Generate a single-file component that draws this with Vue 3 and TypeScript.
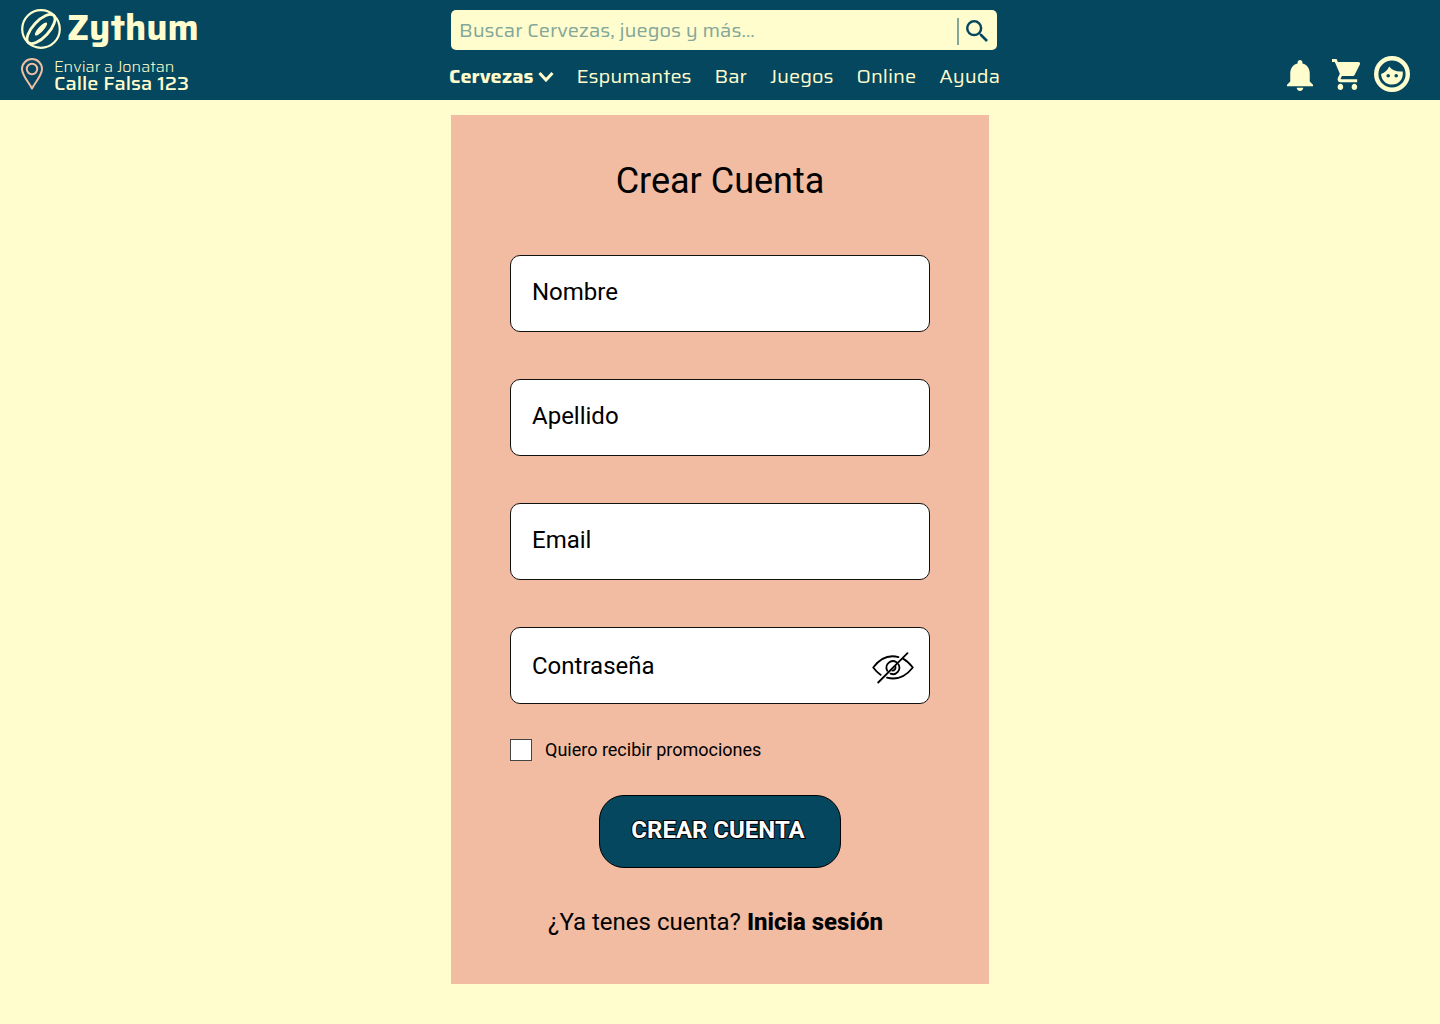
<script setup lang="ts">
import { reactive, ref } from 'vue'

interface Field {
  id: 'nombre' | 'apellido' | 'email'
  label: string
  type: string
}

const sections: string[] = ['Espumantes', 'Bar', 'Juegos', 'Online', 'Ayuda']

const fields: Field[] = [
  { id: 'nombre', label: 'Nombre', type: 'text' },
  { id: 'apellido', label: 'Apellido', type: 'text' },
  { id: 'email', label: 'Email', type: 'email' },
]

const form = reactive({ nombre: '', apellido: '', email: '', password: '', promos: false })
const query = ref('')
const showPassword = ref(false)
</script>

<template>
  <div class="page">
    <header class="header">
      <div class="brand-area">
        <a class="brand" href="#">
          <svg class="brand-mark" viewBox="0 0 40 40" aria-hidden="true">
            <circle cx="20" cy="20" r="18.8" fill="none" stroke="currentColor" stroke-width="2.2" />
            <g transform="rotate(-47 20 20)">
              <ellipse cx="20" cy="20" rx="18.6" ry="8" fill="none" stroke="currentColor" stroke-width="2.8" />
              <ellipse cx="20" cy="20" rx="8.6" ry="2.6" fill="currentColor" />
            </g>
          </svg>
          <span>Zythum</span>
        </a>
        <a class="address" href="#">
          <svg class="pin" viewBox="0 0 22 32" aria-hidden="true">
            <g fill="none" stroke="currentColor" stroke-width="2">
              <path d="M11 30.5C8 24.5 1 17.5 1 11a10 10 0 0 1 20 0c0 6.5-7 13.5-10 19.5z" stroke-linejoin="round" />
              <circle cx="11" cy="11" r="5.2" />
            </g>
          </svg>
          <span class="address-text">
            <span class="address-to">Enviar a Jonatan</span>
            <strong class="address-street">Calle Falsa 123</strong>
          </span>
        </a>
      </div>

      <div class="center">
        <form class="search" role="search" @submit.prevent>
          <input v-model="query" type="search" placeholder="Buscar Cervezas, juegos y más..." aria-label="Buscar" />
          <button type="submit" aria-label="Buscar">
            <svg viewBox="3 3 17.5 17.5" aria-hidden="true">
              <path fill="currentColor" d="M15.5 14h-.79l-.28-.27A6.471 6.471 0 0 0 16 9.5 6.5 6.5 0 1 0 9.5 16c1.61 0 3.09-.59 4.23-1.57l.27.28v.79l5 4.99L20.49 19l-4.99-5zm-6 0C7.01 14 5 11.99 5 9.5S7.01 5 9.5 5 14 7.01 14 9.5 11.99 14 9.5 14z" />
            </svg>
          </button>
        </form>
        <nav class="nav">
          <a class="current" href="#">
            Cervezas
            <svg viewBox="0 0 16 12" aria-hidden="true">
              <path d="M1.5 3 8 10l6.5-7" fill="none" stroke="currentColor" stroke-width="3" />
            </svg>
          </a>
          <a v-for="section in sections" :key="section" href="#">{{ section }}</a>
        </nav>
      </div>

      <div class="actions">
        <button type="button" aria-label="Notificaciones">
          <svg class="bell" viewBox="4 2.5 16 19.5" preserveAspectRatio="none" aria-hidden="true">
            <path fill="currentColor" d="M12 22c1.1 0 2-.9 2-2h-4c0 1.1.89 2 2 2zm6-6v-5c0-3.07-1.64-5.64-4.5-6.32V4c0-.83-.67-1.5-1.5-1.5s-1.5.67-1.5 1.5v.68C7.63 5.36 6 7.92 6 11v5l-2 2v1h16v-1l-2-2z" />
          </svg>
        </button>
        <button type="button" aria-label="Carrito">
          <svg class="cart" viewBox="1 2 20 20" preserveAspectRatio="none" aria-hidden="true">
            <path fill="currentColor" d="M7 18c-1.1 0-1.99.9-1.99 2S5.9 22 7 22s2-.9 2-2-.9-2-2-2zM1 2v2h2l3.6 7.59-1.35 2.45c-.16.28-.25.61-.25.96 0 1.1.9 2 2 2h12v-2H7.42c-.14 0-.25-.11-.25-.25l.03-.12.9-1.63h7.45c.75 0 1.41-.41 1.75-1.03l3.58-6.49A1.003 1.003 0 0 0 20 4H5.21l-.94-2H1zm16 16c-1.1 0-1.99.9-1.99 2s.89 2 1.99 2 2-.9 2-2-.9-2-2-2z" />
          </svg>
        </button>
        <button type="button" aria-label="Mi cuenta">
          <svg class="face" viewBox="0 0 36 36" aria-hidden="true">
            <circle cx="18" cy="18" r="15.8" fill="none" stroke="currentColor" stroke-width="4.4" />
            <path fill="currentColor" fill-rule="evenodd" d="M15.2 10.6c2.8 3.9 7.8 5.5 13.6 4.9.6 8.200-4 13.100-10.800 13.100-6.200 0-10.700-4.400-10.900-10.600 3.800-1.500 6.600-3.700 8.100-7.400zM14.200 18a1.800 1.800 0 1 0 0 3.600 1.800 1.800 0 0 0 0-3.600zm8 0a1.800 1.800 0 1 0 0 3.600 1.800 1.800 0 0 0 0-3.600z" />
          </svg>
        </button>
      </div>
    </header>

    <main class="card">
      <h1>Crear Cuenta</h1>
      <form class="signup" @submit.prevent>
        <div v-for="field in fields" :key="field.id" class="field">
          <input :id="field.id" v-model="form[field.id]" :type="field.type" :placeholder="field.label" :aria-label="field.label" />
        </div>
        <div class="field field-password">
          <input id="password" v-model="form.password" :type="showPassword ? 'text' : 'password'" placeholder="Contraseña" aria-label="Contraseña" />
          <button class="reveal" type="button" aria-label="Mostrar contraseña" @click="showPassword = !showPassword">
            <svg viewBox="0 0 42 32" aria-hidden="true">
              <g fill="none" stroke="currentColor" stroke-width="1.8" stroke-linecap="round" stroke-linejoin="round">
                <path d="M26.5 5.1C15.5 2.2 7.2 7.5 1.2 15.5c2.4 3.2 4.700 5.600 7.600 7.400M31 6.600c3.700 2 6.800 5.100 9.800 8.900-6.800 8.700-15.300 12.900-25.800 10.200" />
                <path d="M24.500 10.200a6.500 6.500 0 0 0-9.200 8.600M26.500 12.400a6.500 6.500 0 0 1-8 9.300" />
                <path d="M23.500 14.800a3.300 3.300 0 0 1-3 3.900" />
                <path d="M35.500 1.200 6.200 30.500" />
              </g>
            </svg>
          </button>
        </div>
        <label class="promos">
          <input v-model="form.promos" type="checkbox" />
          <span>Quiero recibir promociones</span>
        </label>
        <button class="submit" type="submit">CREAR CUENTA</button>
      </form>
      <p class="login">¿Ya tenes cuenta? <a href="#">Inicia sesión</a></p>
    </main>
  </div>
</template>

<style>
body {
  margin: 0;
  background: #fffdcd;
}
</style>

<style scoped>
.page {
  box-sizing: border-box;
  min-height: 100vh;
  padding-bottom: 40px;
  background: #fffdcd;
  color: #000;
  font-family: Roboto, sans-serif;
}

button,
input {
  font: inherit;
}

button {
  padding: 0;
  border: 0;
  background: none;
  color: inherit;
  cursor: pointer;
}

a {
  color: inherit;
  text-decoration: none;
}

svg {
  display: block;
}

.header {
  box-sizing: border-box;
  display: grid;
  grid-template-columns: minmax(190px, 1fr) minmax(0, 546px) minmax(150px, 1fr);
  min-height: 100px;
  padding: 8px 13px 8px 21px;
  background: #04475e;
  color: #fffdcd;
  font-family: Saira, Inter, sans-serif;
}

.brand-area {
  display: flex;
  flex-direction: column;
  gap: 9px;
}

.brand {
  display: flex;
  align-items: flex-end;
  gap: 6px;
  height: 41px;
  font-size: 36px;
  font-weight: 700;
  line-height: 42px;
}

.brand-mark {
  width: 40px;
  height: 40px;
}

.address {
  display: flex;
  gap: 11px;
}

.pin {
  width: 22px;
  height: 32px;
  color: #f2bca2;
}

.address-text {
  display: flex;
  flex-direction: column;
  padding-top: 1px;
}

.address-to {
  font-size: 16px;
  font-weight: 300;
  line-height: 16px;
}

.address-street {
  font-size: 20px;
  font-weight: 500;
  line-height: 16px;
}

.center {
  display: flex;
  flex-direction: column;
  gap: 13px;
  padding-top: 2px;
}

.search {
  display: flex;
  align-items: center;
  height: 40px;
  border-radius: 5px;
  background: #fffdcd;
}

.search input {
  flex: 1;
  min-width: 0;
  height: 40px;
  box-sizing: border-box;
  padding: 0 8px;
  border: 0;
  outline: 0;
  background: none;
  color: #04475e;
  font-size: 20px;
  appearance: none;
}

.search input::placeholder {
  color: #83a798;
  opacity: 1;
}

.search button {
  margin-top: 2px;
  padding: 2px 9px 3px 7px;
  border-left: 2px solid #83a798;
  color: #04475e;
}

.search svg {
  width: 22px;
  height: 22px;
}

.nav {
  display: flex;
  align-items: center;
  gap: 23px;
  margin: 0 -6px 0 -2px;
  font-size: 20px;
  line-height: 26px;
  white-space: nowrap;
}

.current {
  display: flex;
  align-items: center;
  gap: 4px;
  font-weight: 700;
}

.current svg {
  width: 16px;
  height: 12px;
}

.actions {
  display: flex;
  align-items: flex-end;
  justify-content: flex-end;
  gap: 14px;
  padding-right: 17px;
}

.actions button {
  display: grid;
  place-items: center;
  height: 36px;
}

.bell {
  width: 26px;
  height: 31px;
  margin-right: 5px;
  padding-top: 2px;
}

.cart {
  width: 28px;
  height: 31px;
}

.face {
  width: 36px;
  height: 36px;
}

.card {
  box-sizing: border-box;
  width: 100%;
  max-width: 538px;
  margin: 15px auto 0;
  padding: 44px 59px 46px;
  background: #f2bca2;
}

h1 {
  margin: 0 0 52px;
  font-size: 36px;
  font-weight: 400;
  line-height: 44px;
  text-align: center;
}

.signup {
  display: flex;
  flex-direction: column;
  gap: 47px;
}

.field {
  box-sizing: border-box;
  display: flex;
  align-items: center;
  height: 77px;
  padding-right: 15px;
  border: 1px solid #111;
  border-radius: 10px;
  background: #fff;
}

.field-password {
  padding-top: 4px;
}

.field input {
  flex: 1;
  min-width: 0;
  height: 70px;
  box-sizing: border-box;
  padding: 0 0 4px 21px;
  border: 0;
  outline: 0;
  background: none;
  font-size: 24px;
}

.field input::placeholder {
  color: #000;
  opacity: 1;
}

.reveal svg {
  width: 42px;
  height: 32px;
}

.promos {
  display: flex;
  align-items: center;
  gap: 13px;
  margin-top: -12px;
  font-size: 18px;
  line-height: 22px;
}

.promos input {
  width: 22px;
  height: 22px;
  margin: 0;
  border: 1px solid #444;
  background: #fff;
  appearance: none;
}

.promos input:checked {
  background: #04475e;
  box-shadow: inset 0 0 0 3px #fff;
}

.submit {
  align-self: center;
  width: 242px;
  height: 73px;
  margin-top: -13px;
  padding: 0 4px 4px 0;
  border: 1px solid #000;
  border-radius: 25px;
  background: #04475e;
  color: #fff;
  font-size: 24px;
  font-weight: 700;
  -webkit-text-stroke: 2px #000;
  paint-order: stroke fill;
}

.login {
  margin: 38px 0 0;
  padding-right: 9px;
  font-size: 24px;
  line-height: 32px;
  text-align: center;
}

.login a {
  font-weight: 800;
}
</style>
